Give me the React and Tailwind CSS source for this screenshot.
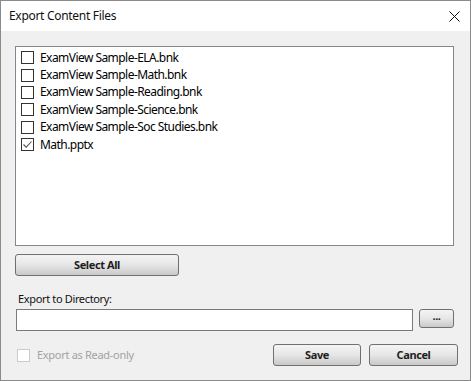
import { useState } from 'react';

const files = [
  { name: 'ExamView Sample-ELA.bnk', checked: false },
  { name: 'ExamView Sample-Math.bnk', checked: false },
  { name: 'ExamView Sample-Reading.bnk', checked: false },
  { name: 'ExamView Sample-Science.bnk', checked: false },
  { name: 'ExamView Sample-Soc Studies.bnk', checked: false },
  { name: 'Math.pptx', checked: true },
];

const btn =
  'rounded-[3px] border border-[#707070] bg-gradient-to-b from-[#f4f4f4] via-[#e6e6e6] to-[#c9c9c9] text-[11px] font-bold tracking-[-0.4px] text-[#1e1e1e] flex items-center justify-center';

const Box = ({ checked, disabled }) => (
  <span
    className={`w-[13px] h-[13px] shrink-0 border bg-white flex items-center justify-center ${
      disabled ? 'border-[#cccccc]' : 'border-[#333333]'
    }`}
  >
    {checked && (
      <svg width="11" height="11" viewBox="0 0 11 11">
        <path d="M1.5 5.5 L4.2 8.2 L9.5 2.5" fill="none" stroke="#555" strokeWidth="1.1" />
      </svg>
    )}
  </span>
);

export default function App() {
  const [items, setItems] = useState(files);

  const toggle = (i) =>
    setItems(items.map((it, j) => (j === i ? { ...it, checked: !it.checked } : it)));

  return (
    <div
      className="w-[471px] h-[381px] border border-[#8a8a8a] bg-[#f0f0f0] flex flex-col text-[12px] text-black"
      style={{ fontFamily: '"Noto Sans", "Open Sans", sans-serif' }}
    >
      {/* title bar */}
      <div className="h-[30px] bg-white flex items-center justify-between pl-[8px] pr-[10px] shrink-0">
        <span className="text-[12px] tracking-[-0.3px] text-[#111]">Export Content Files</span>
        <svg width="11" height="11" viewBox="0 0 11 11">
          <path d="M0.5 0.5 L10.5 10.5 M10.5 0.5 L0.5 10.5" stroke="#111" strokeWidth="1" />
        </svg>
      </div>

      <div className="flex flex-col pl-[14px] pr-[15px] pt-[15px]">
        {/* file list */}
        <div className="h-[200px] w-[439px] border border-[#828790] bg-white pt-[2px] pl-[5px]">
          {items.map((it, i) => (
            <div
              key={it.name}
              onClick={() => toggle(i)}
              className="h-[17.4px] flex items-center gap-[6px] cursor-default"
            >
              <Box checked={it.checked} />
              <span className="leading-none tracking-[-0.55px]">{it.name}</span>
            </div>
          ))}
        </div>

        <button className={`${btn} mt-[8px] w-[164px] h-[22px]`}>Select All</button>

        <label className="mt-[15px] ml-[3px] h-[17px] flex items-center text-[11px] tracking-[-0.35px] text-[#111]">
          Export to Directory:
        </label>

        <div className="mt-[1px] flex items-start gap-[6px]">
          <input
            type="text"
            className="ml-[1px] w-[397px] h-[22px] border border-[#7a7a7a] bg-white outline-none px-1"
          />
          <button className={`${btn} w-[35px] h-[19px] pb-[4px] text-[10px]`}>...</button>
        </div>

        <div className="mt-[13px] flex items-center">
          <div className="flex items-center gap-[7px] ml-[2px] text-[11px] tracking-[-0.3px] text-[#a2a2a2]">
            <Box disabled />
            <span>Export as Read-only</span>
          </div>
          <div className="ml-auto flex gap-[8px] -mr-[3px]">
            <button className={`${btn} w-[88px] h-[22px]`}>Save</button>
            <button className={`${btn} w-[89px] h-[22px]`}>Cancel</button>
          </div>
        </div>
      </div>
    </div>
  );
}
